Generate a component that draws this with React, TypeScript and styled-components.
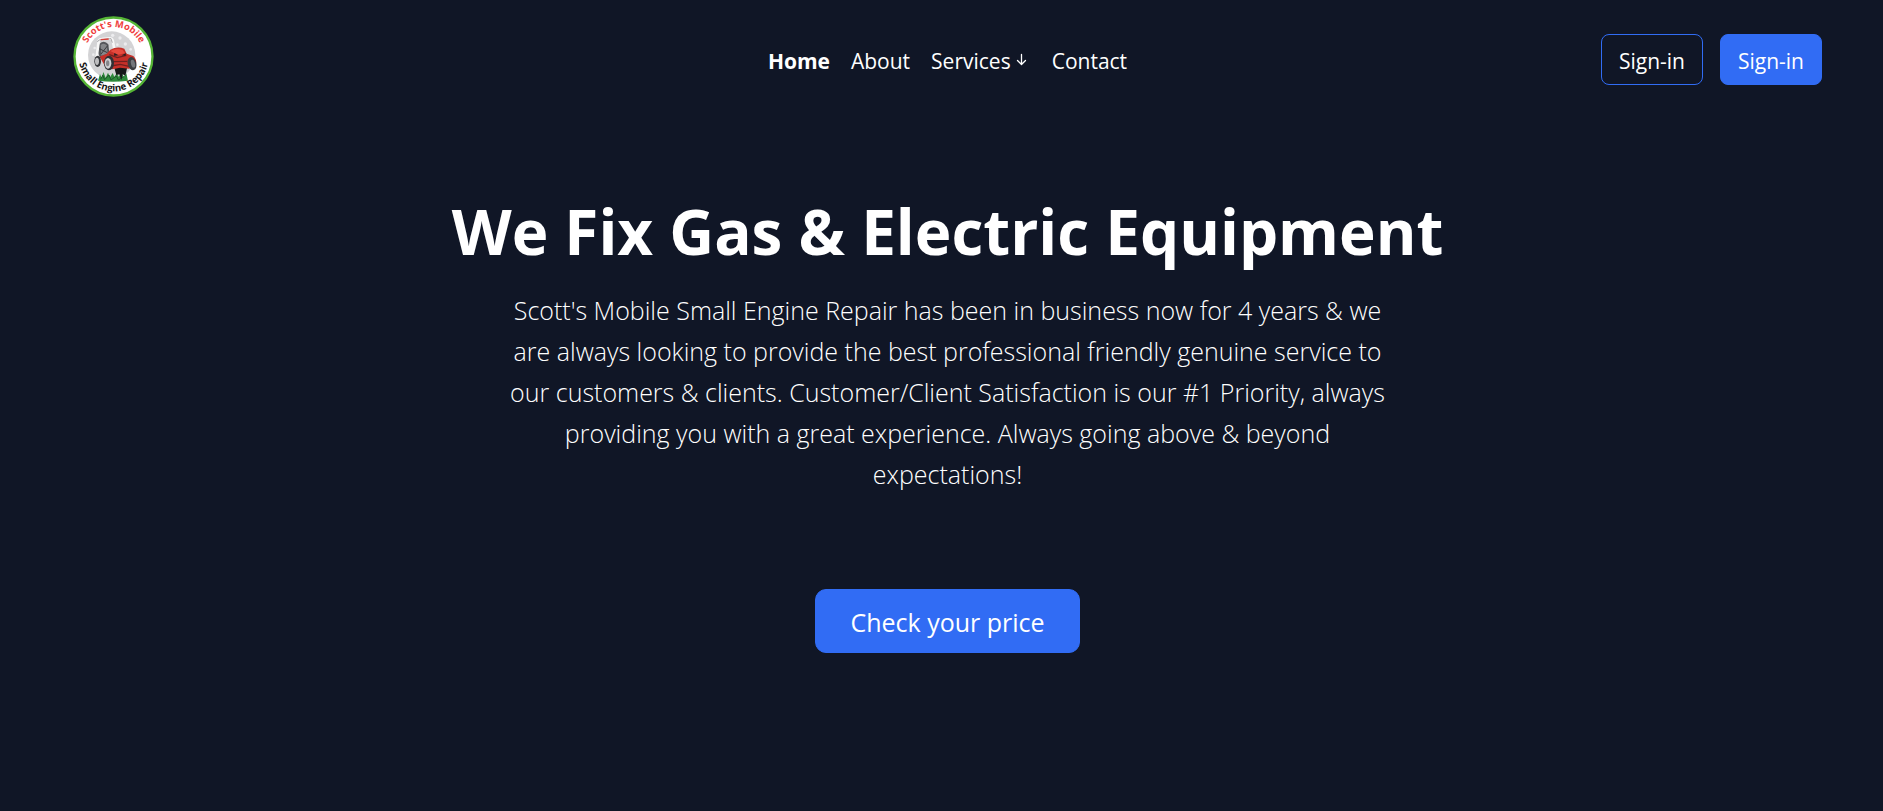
import React from "react";
import styled, { createGlobalStyle } from "styled-components";

const GlobalStyle = createGlobalStyle`
  *, *::before, *::after { box-sizing: border-box; }
  body {
    margin: 0;
    background: #101626;
    color: #ffffff;
    font-family: "Segoe UI", "Open Sans", "Noto Sans", sans-serif;
  }
`;

const Page = styled.div`
  min-height: 100vh;
  padding: 16px 61px 64px 73px;
`;

const Header = styled.header`
  display: grid;
  grid-template-columns: 1fr auto 1fr;
  align-items: center;
`;

const LogoLink = styled.a`
  display: block;
  width: 81px;
  height: 81px;
`;

const LogoArt = styled.svg`
  display: block;
  width: 100%;
  height: 100%;
`;

const Nav = styled.nav`
  display: flex;
  align-items: center;
  gap: 21px;
  padding-top: 8px;
`;

const NavLink = styled.a<{ $active?: boolean }>`
  display: flex;
  align-items: center;
  color: #ffffff;
  font-size: 21px;
  line-height: 32px;
  font-weight: ${(p) => (p.$active ? 700 : 400)};
  text-decoration: none;
`;

const ArrowIcon = styled.svg`
  width: 18px;
  height: 18px;
  margin-left: 2px;
`;

const Actions = styled.div`
  display: flex;
  justify-content: flex-end;
  gap: 17px;
  padding-top: 6px;
`;

const Button = styled.button<{ $outline?: boolean; $large?: boolean }>`
  border: 1px solid #316cf4;
  border-radius: ${(p) => (p.$large ? 11 : 8)}px;
  padding: ${(p) => (p.$large ? "12px 34px 10px" : "10px 17px 6px")};
  background: ${(p) => (p.$outline ? "transparent" : "#316cf4")};
  color: #ffffff;
  font-family: inherit;
  font-size: ${(p) => (p.$large ? 25 : 21)}px;
  line-height: ${(p) => (p.$large ? 40 : 33)}px;
  cursor: pointer;
`;

const Hero = styled.main`
  display: flex;
  flex-direction: column;
  align-items: center;
  padding-top: 94px;
  text-align: center;
`;

const Title = styled.h1`
  margin: 0;
  font-size: 62px;
  line-height: 80px;
  font-weight: 700;
`;

const Lead = styled.p`
  max-width: 900px;
  margin: 19px 0 94px;
  font-size: 25px;
  line-height: 41px;
  font-weight: 300;
`;

function Logo() {
  return (
    <LogoArt viewBox="39 32 243 243" role="img" aria-label="Scott's Mobile Small Engine Repair">
      <defs>
        <path id="arcTop" d="M73 153 A88 88 0 0 1 249 153" />
        <path id="arcBottom" d="M56 153 A105 105 0 1 0 266 153" />
      </defs>
      <circle cx="160.500" cy="153.500" r="117" fill="#ffffff" stroke="#55b435" strokeWidth="7" />
      <circle cx="155" cy="149" r="71" fill="#d3d3d5" />
      <g fill="#ececee">
        <circle cx="158" cy="90" r="5" />
        <circle cx="180" cy="98" r="5" />
        <circle cx="196" cy="116" r="5" />
        <circle cx="172" cy="118" r="4" />
        <circle cx="212" cy="132" r="4" />
        <circle cx="104" cy="128" r="4" />
        <circle cx="100" cy="148" r="4" />
      </g>
      <path d="M114 226 L120 206 L125 218 L130 200 L137 217 L144 202 L150 216 L158 203 L163 215 L170 204 L176 214 L186 203 L191 215 L199 204 L204 226 Q158 232 114 226Z" fill="#2f8b3b" />
      <path d="M122 222 L128 210 L134 223 L147 209 L153 224 L169 212 L175 224 L193 213" fill="none" stroke="#1b5429" strokeWidth="3" />
      <path d="M162 184 L202 184 L196 212 L188 206 L184 224 L178 207 L169 209Z" fill="#171719" />
      <path d="M118 116 Q132 102 145 117 L149 151 L121 158 L113 141Z" fill="#55575b" />
      <path d="M122 119 Q132 111 140 120 L143 145 L124 151Z" fill="#85878a" />
      <path d="M118 130 L142 142 M123 146 L143 121" stroke="#393a3e" strokeWidth="3" />
      <path d="M110 155 L116 108 Q117 101 125 101 L149 99 Q156 99 158 105 L163 130" fill="none" stroke="#f7f7f7" strokeWidth="8" strokeLinecap="round" />
      <path d="M112 110 L117 104 L153 100 L157 112" fill="none" stroke="#85858a" strokeWidth="2" />
      <path d="M122 103 L146 101" stroke="#d63f38" strokeWidth="4" />
      <path d="M119 154 L140 145 L151 133 Q172 121 193 130 L200 145 L220 152 Q232 164 228 178 L207 190 L180 187 L158 192 L136 184Z" fill="#c53029" />
      <path d="M151 137 Q169 127 188 134 L195 144 L173 148Z" fill="#e64a3e" />
      <path d="M148 148 L172 157 L199 150 M157 169 L202 168 M153 182 L181 177 L207 183" fill="none" stroke="#70201f" strokeWidth="4" />
      <path d="M163 143 L176 150 L162 151Z M185 150 L199 143 L196 151Z" fill="#252022" />
      <ellipse cx="113" cy="168" rx="10" ry="17" fill="#343539" />
      <ellipse cx="111" cy="168" rx="6" ry="11" fill="#bebec0" />
      <ellipse cx="147" cy="173" rx="15" ry="22" fill="#303135" />
      <ellipse cx="144" cy="174" rx="10" ry="16" fill="#d0d0d2" />
      <ellipse cx="143" cy="174" rx="5" ry="9" fill="#85868a" />
      <ellipse cx="216" cy="175" rx="13" ry="20" fill="#3c3d40" transform="rotate(-15 216 175)" />
      <ellipse cx="219" cy="175" rx="6" ry="12" fill="#75777b" transform="rotate(-15 219 175)" />
      <g fontFamily="Open Sans, sans-serif" fontWeight="700" textAnchor="middle">
        <text fill="#ef3e3e" fontSize="28">
          <textPath href="#arcTop" startOffset="50%">Scott's Mobile</textPath>
        </text>
        <text fill="#161616" fontSize="29">
          <textPath href="#arcBottom" startOffset="50%">Small Engine Repair</textPath>
        </text>
      </g>
    </LogoArt>
  );
}

function DownArrow() {
  return (
    <ArrowIcon viewBox="0 0 18 18" fill="none" stroke="#ffffff" strokeWidth="1.300" strokeLinecap="round" strokeLinejoin="round" aria-hidden="true">
      <path d="M8.500 2.500V12M4.500 8.500L8.500 12.500L12.500 8.500" />
    </ArrowIcon>
  );
}

export default function App() {
  return (
    <>
      <GlobalStyle />
      <Page>
        <Header>
          <LogoLink href="#home">
            <Logo />
          </LogoLink>
          <Nav>
            <NavLink href="#home" $active>Home</NavLink>
            <NavLink href="#about">About</NavLink>
            <NavLink href="#services">
              Services
              <DownArrow />
            </NavLink>
            <NavLink href="#contact">Contact</NavLink>
          </Nav>
          <Actions>
            <Button type="button" $outline>Sign-in</Button>
            <Button type="button">Sign-in</Button>
          </Actions>
        </Header>
        <Hero>
          <Title>We Fix Gas &amp; Electric Equipment</Title>
          <Lead>
            Scott's Mobile Small Engine Repair has been in business now for 4 years &amp; we
            are always looking to provide the best professional friendly genuine service to
            our customers &amp; clients. Customer/Client Satisfaction is our #1 Priority, always
            providing you with a great experience. Always going above &amp; beyond
            expectations!
          </Lead>
          <Button type="button" $large>Check your price</Button>
        </Hero>
      </Page>
    </>
  );
}
